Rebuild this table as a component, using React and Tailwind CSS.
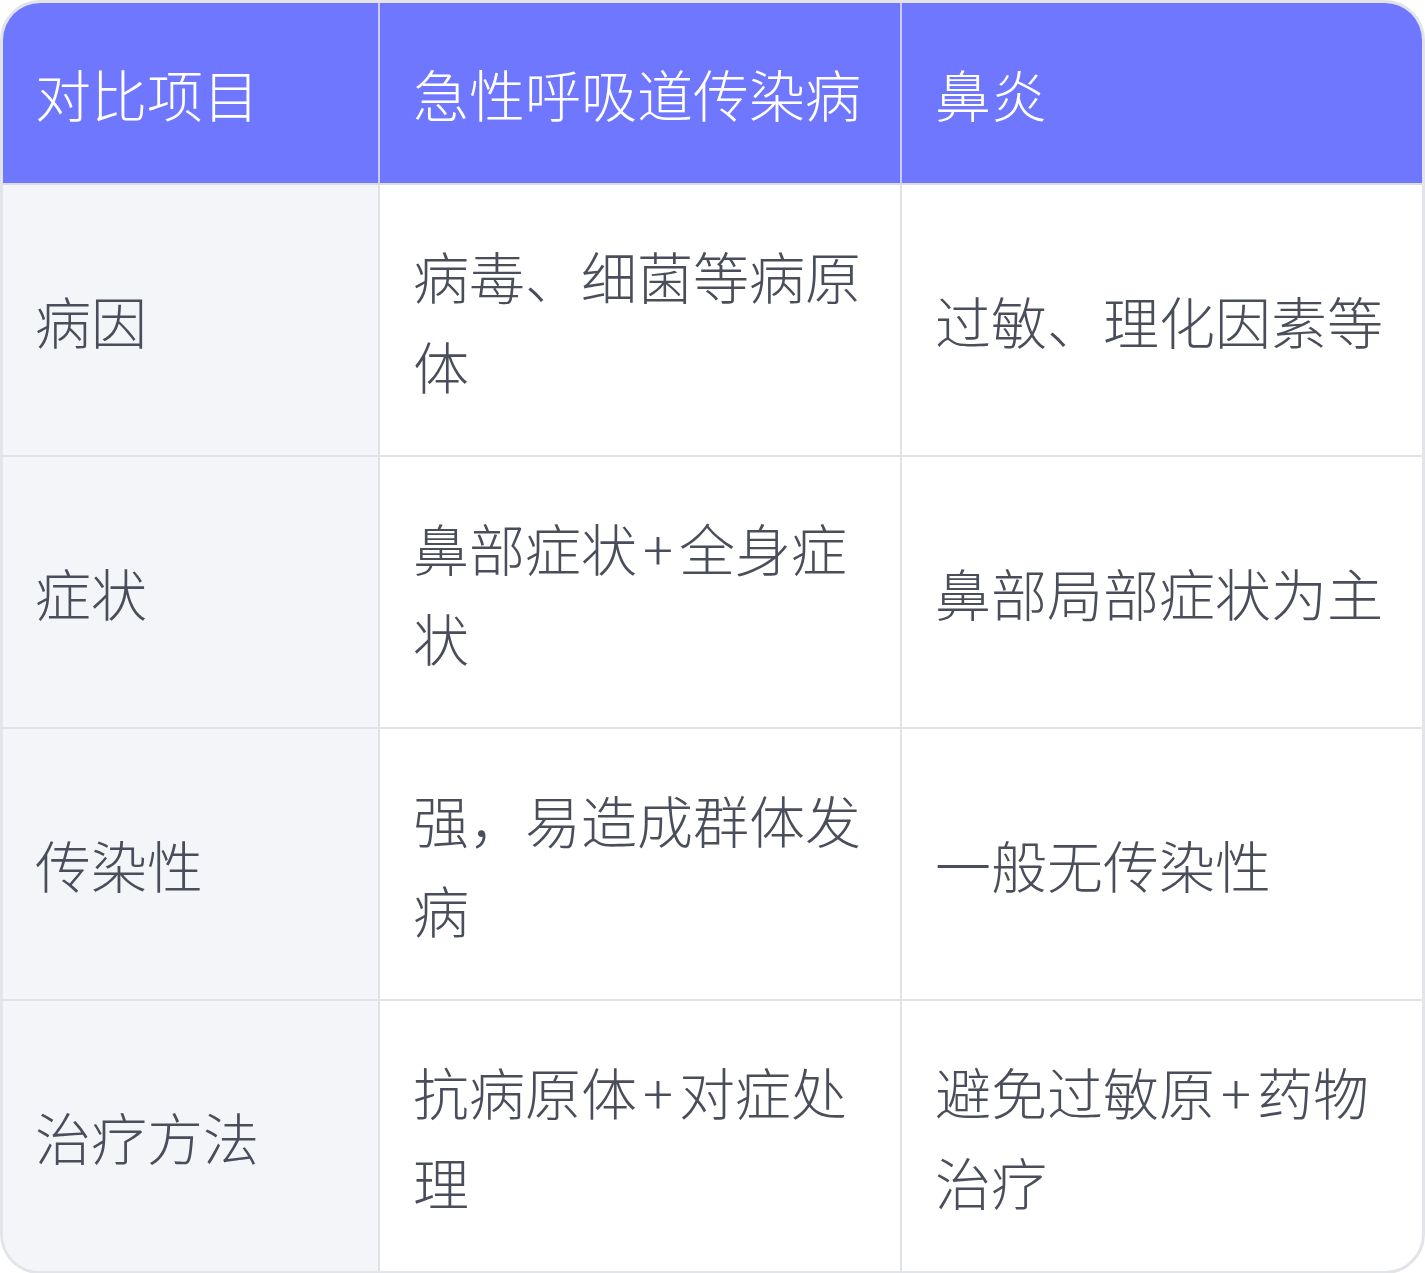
const rows = [
  ["病因", ["病毒、细菌等病原体"], ["过敏、理化因素等"]],
  ["症状", ["鼻部症状", "全身症状"], ["鼻部局部症状为主"]],
  ["传染性", ["强，易造成群体发病"], ["一般无传染性"]],
  ["治疗方法", ["抗病原体", "对症处理"], ["避免过敏原", "药物治疗"]],
];

// join parts with a spaced plus sign, as in the design
const Plus = ({ parts }) => (
  <>
    {parts[0]}
    {parts[1] && (
      <>
        <span className="mx-[6px]">+</span>
        {parts[1]}
      </>
    )}
  </>
);

const App = () => {
  return (
    <div
      className="w-[1425px] overflow-hidden rounded-[40px] border-[3px] border-[#e3e4e9] bg-white"
      style={{ fontFamily: '"Noto Sans CJK SC", "Noto Sans", sans-serif' }}
    >
      <table className="w-full table-fixed border-separate border-spacing-0 text-[56px] font-light leading-[90px]">
        <colgroup>
          <col className="w-[377px]" />
          <col className="w-[522px]" />
          <col />
        </colgroup>
        <thead>
          <tr className="bg-[#7077ff] text-white">
            <th className="border-b-2 border-r-2 border-b-[#dcdde4] border-r-[#c9ccf4] pl-[32px] pr-[30px] py-[45px] text-left font-light">
              对比项目
            </th>
            <th className="border-b-2 border-r-2 border-b-[#dcdde4] border-r-[#c9ccf4] pl-[33px] pr-[30px] py-[45px] text-left font-light">
              急性呼吸道传染病
            </th>
            <th className="border-b-2 border-b-[#dcdde4] pl-[33px] pr-[30px] py-[45px] text-left font-light">
              鼻炎
            </th>
          </tr>
        </thead>
        <tbody className="text-[#4a4e5a]">
          {rows.map((r, i) => {
            const last = i === rows.length - 1;
            return (
              <tr key={r[0]}>
                <td
                  className={`border-r-2 border-[#e1e2e7] bg-[#f4f5f9] pl-[32px] pr-[30px] py-[45px] align-middle ${
                    last ? "" : "border-b-2"
                  }`}
                >
                  {r[0]}
                </td>
                <td
                  className={`border-r-2 border-[#e1e2e7] pl-[33px] pr-[30px] py-[45px] align-middle ${
                    last ? "" : "border-b-2"
                  }`}
                >
                  <Plus parts={r[1]} />
                </td>
                <td
                  className={`border-[#e1e2e7] pl-[33px] pr-[30px] py-[45px] align-middle ${
                    last ? "" : "border-b-2"
                  }`}
                >
                  <Plus parts={r[2]} />
                </td>
              </tr>
            );
          })}
        </tbody>
      </table>
    </div>
  );
};

export default App;
